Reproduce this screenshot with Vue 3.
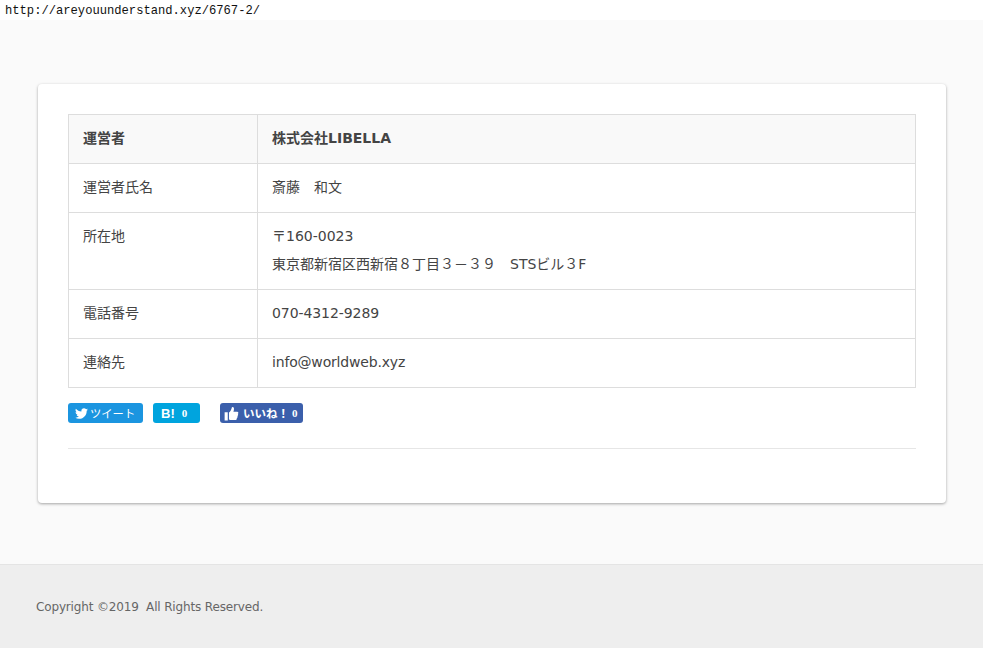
<script setup>
const rows = [
  { head: '運営者', lines: ['株式会社LIBELLA'], strong: true },
  { head: '運営者氏名', lines: ['斎藤　和文'] },
  { head: '所在地', lines: ['〒160-0023', '東京都新宿区西新宿８丁目３－３９　STSビル３F'] },
  { head: '電話番号', lines: ['070-4312-9289'], tight: 'phone' },
  { head: '連絡先', lines: ['info@worldweb.xyz'], tight: 'mail' }
]
</script>

<template>
  <div class="page">
    <div class="url">http://areyouunderstand.xyz/6767-2/</div>
    <main class="main">
      <section class="card">
        <table class="info">
          <tbody>
            <tr v-for="row in rows" :key="row.head" :class="{ strong: row.strong }">
              <th>{{ row.head }}</th>
              <td :class="row.tight"><p v-for="line in row.lines" :key="line">{{ line }}</p></td>
            </tr>
          </tbody>
        </table>
        <div class="share">
          <a class="btn tw">
            <svg class="tw-icon" viewBox="0 0 24 24"><path fill="#fff" d="M23.95 4.57a10 10 0 0 1-2.82.77 4.96 4.96 0 0 0 2.16-2.72c-.95.55-2 .95-3.12 1.18a4.92 4.92 0 0 0-8.38 4.48C7.69 8.1 4.07 6.13 1.64 3.16a4.82 4.82 0 0 0-.67 2.48c0 1.71.87 3.21 2.19 4.1a4.9 4.9 0 0 1-2.23-.61v.06a4.92 4.92 0 0 0 3.95 4.83 5 5 0 0 1-2.21.08 4.94 4.94 0 0 0 4.6 3.42A9.87 9.87 0 0 1 0 19.54a14 14 0 0 0 7.56 2.21c9.05 0 14-7.5 14-13.98 0-.21 0-.42-.02-.63a9.94 9.94 0 0 0 2.41-2.57z"/></svg>
            <span class="tw-label">ツイート</span>
          </a>
          <a class="btn hb"><b class="hb-mark">B!</b><span class="count">0</span></a>
          <a class="btn fb">
            <svg class="fb-icon" viewBox="0 0 24 24"><path fill="#fff" d="M1 10h5v13H1zM8 10.500c2-1.500 4-4.500 4.500-8 .2-1.500 3.500-1.500 3.500 2 0 2-.5 3.500-1 4.500h6c2.500 0 2.500 3 1 3.500 1 1 .8 3-.5 3.500.6 1.200.2 2.800-1 3.200.4 1.600-.6 3.300-2.500 3.300H12c-1.500 0-2.800-.5-4-1z"/></svg>
            <b class="fb-label">いいね！</b><span class="count">0</span>
          </a>
        </div>
        <hr class="rule" />
      </section>
    </main>
    <footer class="footer">Copyright ©2019&nbsp; All Rights Reserved.</footer>
  </div>
</template>

<style>
html, body { margin: 0; background: #fff; }
</style>

<style scoped>
.page {
  height: 648px;
  display: flex;
  flex-direction: column;
  font-family: "DejaVu Sans", "Noto Sans CJK JP", sans-serif;
  color: #444;
  overflow: hidden;
}
.url {
  height: 20px;
  padding-left: 5px;
  background: #fff;
  color: #111;
  font: 12.15px/22px "Liberation Mono", "Noto Sans CJK JP", monospace;
  padding-top: 0;
}
.main {
  flex: 1;
  background: #fafafa;
  padding: 64px 37px 0 38px;
}
.card {
  height: 419px;
  box-sizing: border-box;
  padding: 30px 30px 0;
  background: #fff;
  border-radius: 4px;
  box-shadow: 0 1px 3px rgba(0, 0, 0, 0.35);
}
.info {
  width: 100%;
  border-collapse: collapse;
  font-size: 14px;
  table-layout: fixed;
}
.info th, .info td {
  border: 1px solid #ddd;
  padding: 10px 14px 12px;
  text-align: left;
  vertical-align: top;
  font-weight: 400;
  line-height: 26px;
}
.info th { width: 160px; }
.info p { margin: 0; }
.info p + p { margin-top: 2px; }
.info .phone { letter-spacing: -0.08px; }
.info .mail { letter-spacing: -0.18px; }
.strong th, .strong td { background: #f9f9f9; font-weight: 700; }
.share {
  display: flex;
  align-items: center;
  margin-top: 15px;
}
.btn {
  height: 20px;
  box-sizing: border-box;
  display: flex;
  align-items: center;
  border-radius: 3px;
  color: #fff;
  font-size: 10.5px;
}
.tw { width: 75px; background: #1b95e0; padding-left: 7px; }
.tw-icon { width: 13px; height: 13px; margin-right: 2px; }
.tw-label { font-size: 11.3px; white-space: nowrap; }
.hb { width: 47px; margin-left: 10px; background: #00a4de; padding-left: 8px; }
.hb-mark { font-size: 13px; font-family: "Liberation Sans", sans-serif; margin-right: 7px; }
.count { font: 700 11px "Liberation Serif", serif; }
.fb { width: 83px; margin-left: 20px; background: #3b5fab; padding-left: 4px; }
.fb-icon { width: 15px; height: 15px; margin-right: 4px; }
.fb-label { font-size: 11.5px; margin-right: 3px; white-space: nowrap; }
.rule {
  margin: 25px 0 0;
  border: 0;
  border-top: 1px solid #e6e6e6;
}
.footer {
  height: 84px;
  box-sizing: border-box;
  background: #eee;
  border-top: 1px solid #e4e4e4;
  padding: 33px 0 0 36px;
  color: #666;
  font-size: 12px;
  line-height: 18px;
  letter-spacing: -0.15px;
}
</style>
